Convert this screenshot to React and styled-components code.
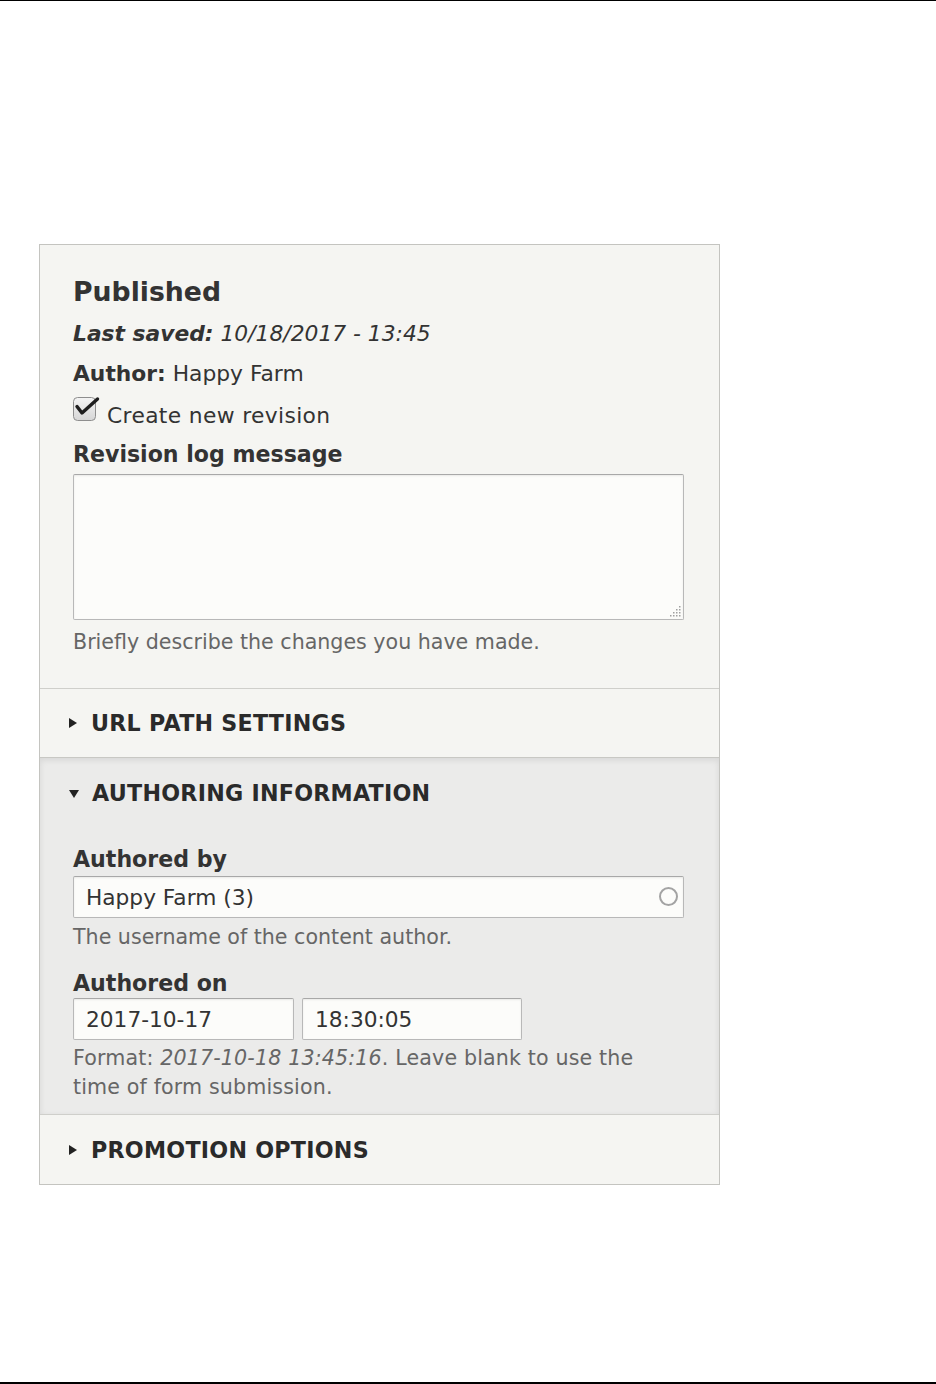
import React from 'react'
import styled, { createGlobalStyle } from 'styled-components'

const GlobalStyle = createGlobalStyle`
  html, body {
    margin: 0;
    padding: 0;
    background: #fff;
  }
  body {
    font-family: "DejaVu Sans", "Liberation Sans", sans-serif;
    color: #333;
  }
`

const Page = styled.div`
  box-sizing: border-box;
  height: 1384px;
  border-top: 1px solid #000;
  border-bottom: 2px solid #000;
  padding: 243px 0 0 39px;
`

const Card = styled.aside`
  box-sizing: border-box;
  width: 681px;
  border: 1px solid #c4c4c0;
  background: #f5f5f2;
`

const Header = styled.div`
  padding: 31px 35px 32px 33px;
`

const Title = styled.h2`
  margin: 0;
  font-size: 26.7px;
  line-height: 32px;
  font-weight: bold;
  color: #333;
`

const MetaLine = styled.div`
  margin-top: ${p => p.$gap || 11}px;
  font-size: 21.8px;
  line-height: 29px;
  font-style: ${p => (p.$italic ? 'italic' : 'normal')};

  strong {
    font-weight: bold;
  }
`

const CheckRow = styled.label`
  display: flex;
  align-items: center;
  gap: 7px;
  margin-top: 13px;
  font-size: 21.8px;
  line-height: 29px;
  letter-spacing: 0.35px;

  svg {
    flex: none;
    margin-top: -12px;
  }
`

const Label = styled.div`
  margin-top: ${p => p.$gap}px;
  font-size: 22.1px;
  line-height: 29px;
  font-weight: bold;
  color: #333;
`

const AreaWrap = styled.div`
  position: relative;
  margin-top: 5.5px;
`

const TextArea = styled.textarea`
  display: block;
  box-sizing: border-box;
  width: 100%;
  height: 146px;
  padding: 8px 13px;
  border: 1px solid #b8b8b8;
  border-top-color: #a8a8a8;
  border-radius: 2px;
  background: #fcfcfa;
  box-shadow: inset 0 1px 2px rgba(0, 0, 0, 0.08);
  font-family: inherit;
  font-size: 21.7px;
  color: #333;
  resize: none;
  outline: none;
`

const Grip = styled.svg`
  position: absolute;
  right: 3px;
  bottom: 3px;
`

const Description = styled.div`
  margin-top: ${p => p.$gap}px;
  font-size: 20.6px;
  line-height: ${p => p.$lh || 28}px;
  color: #666;
  letter-spacing: ${p => p.$ls || 0}px;

  em {
    font-style: italic;
  }
`

const Details = styled.section`
  border-top: 1px solid ${p => (p.$open ? '#c8c8c4' : '#cfcfcb')};
  background: ${p => (p.$open ? '#ebebea' : '#f5f5f2')};
  box-shadow: ${p => (p.$open ? 'inset 0 2px 6px rgba(0, 0, 0, 0.09)' : 'none')};
`

const Summary = styled.div`
  display: flex;
  align-items: center;
  gap: 13px;
  height: ${p => p.$h || 68}px;
  padding-left: 29px;
  font-size: 22.2px;
  font-weight: bold;
  text-transform: uppercase;
  color: #2a2a2a;
  letter-spacing: 0.25px;
`

const Marker = styled.span`
  width: 0;
  height: 0;
  border-style: solid;
  ${p =>
    p.$open
      ? 'border-width: 8px 5px 0 5px; border-color: #222 transparent transparent transparent; margin-top: 1px;'
      : 'border-width: 5px 0 5px 8px; border-color: transparent transparent transparent #222; margin-right: 1px;'}
`

const DetailsBody = styled.div`
  padding: 0 35px 12.5px 33px;
`

const InputWrap = styled.div`
  position: relative;
  margin-top: ${p => p.$gap || 0}px;
  width: ${p => p.$w || '100%'};
`

const TextInput = styled.input`
  display: block;
  box-sizing: border-box;
  width: 100%;
  height: 42px;
  padding: 0 12px;
  border: 1px solid #b8b8b8;
  border-top-color: #a8a8a8;
  border-radius: 2px;
  background: #fcfcfa;
  box-shadow: inset 0 1px 2px rgba(0, 0, 0, 0.08);
  font-family: inherit;
  font-size: 21.7px;
  color: #333;
  outline: none;
`

const Throbber = styled.span`
  position: absolute;
  right: 6px;
  top: 11px;
  box-sizing: border-box;
  width: 19px;
  height: 19px;
  border: 2.5px solid #a3a3a3;
  border-radius: 50%;
`

const DateRow = styled.div`
  display: flex;
  gap: 8px;
  margin-top: 0.5px;
`

const CheckIcon = () => (
  <svg width="27" height="28" viewBox="0 0 27 28">
    <defs>
      <linearGradient id="cb" x1="0" y1="0" x2="0" y2="1">
        <stop offset="0" stopColor="#f4f4f4" />
        <stop offset="1" stopColor="#d6d6d6" />
      </linearGradient>
    </defs>
    <rect x="0.5" y="2.5" width="22" height="23" rx="4" fill="url(#cb)" stroke="#8e8e8e" />
    <path d="M4 11.5 L9 18 L24.5 4" fill="none" stroke="#1e1e1e" strokeWidth="3.4" strokeLinecap="round" strokeLinejoin="round" />
  </svg>
)

const gripDots = [
  [10, 1], [7, 4], [10, 4], [4, 7], [7, 7], [10, 7], [1, 10], [4, 10], [7, 10], [10, 10],
]

const ResizeGrip = () => (
  <Grip width="12" height="12" viewBox="0 0 12 12">
    {gripDots.map(([x, y]) => (
      <rect key={`${x}-${y}`} x={x} y={y} width="1.5" height="1.5" fill="#a0a0a0" />
    ))}
  </Grip>
)

export default function App() {
  return (
    <Page>
      <GlobalStyle />
      <Card>
        <Header>
          <Title>Published</Title>
          <MetaLine $gap={10.5} $italic>
            <strong>Last saved:</strong> 10/18/2017 - 13:45
          </MetaLine>
          <MetaLine $gap={11}>
            <strong>Author:</strong> Happy Farm
          </MetaLine>
          <CheckRow>
            <CheckIcon />
            Create new revision
          </CheckRow>
          <Label $gap={10}>Revision log message</Label>
          <AreaWrap>
            <TextArea />
            <ResizeGrip />
          </AreaWrap>
          <Description $gap={8}>Briefly describe the changes you have made.</Description>
        </Header>

        <Details>
          <Summary>
            <Marker />
            URL path settings
          </Summary>
        </Details>

        <Details $open>
          <Summary $h={70}>
            <Marker $open />
            Authoring information
          </Summary>
          <DetailsBody>
            <Label $gap={16.5}>Authored by</Label>
            <InputWrap $gap={2.5}>
              <TextInput defaultValue="Happy Farm (3)" />
              <Throbber />
            </InputWrap>
            <Description $gap={5}>The username of the content author.</Description>
            <Label $gap={17.5}>Authored on</Label>
            <DateRow>
              <InputWrap $w="221px">
                <TextInput defaultValue="2017-10-17" />
              </InputWrap>
              <InputWrap $w="220px">
                <TextInput defaultValue="18:30:05" />
              </InputWrap>
            </DateRow>
            <Description $gap={3.5} $lh={29} $ls={0.15}>
              Format: <em>2017-10-18 13:45:16</em>. Leave blank to use the
              <br />
              time of form submission.
            </Description>
          </DetailsBody>
        </Details>

        <Details>
          <Summary $h={69}>
            <Marker />
            Promotion options
          </Summary>
        </Details>
      </Card>
    </Page>
  )
}
